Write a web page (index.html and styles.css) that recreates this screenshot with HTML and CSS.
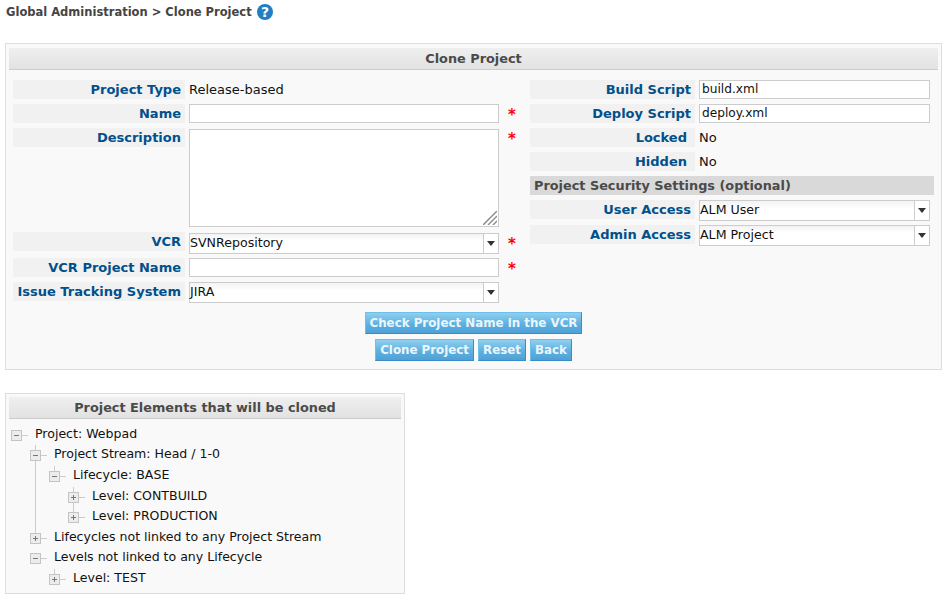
FILE: index.html
```html
<!DOCTYPE html>
<html lang="en">
<head>
<meta charset="utf-8">
<title>Clone Project</title>
<link rel="stylesheet" href="styles.css">
</head>
<body>
<svg class="defs" width="0" height="0">
  <symbol id="t-minus" viewBox="0 0 17 11"><rect x=".5" y=".5" width="10" height="10" fill="#ececec" stroke="#c4c4c4"/><path d="M3 5.5h5" stroke="#777"/><path d="M11 5.5h6" stroke="#ccc"/></symbol>
  <symbol id="t-plus" viewBox="0 0 17 11"><rect x=".5" y=".5" width="10" height="10" fill="#ececec" stroke="#c4c4c4"/><path d="M3 5.5h5M5.5 3v5" stroke="#777"/><path d="M11 5.5h6" stroke="#ccc"/></symbol>
</svg>
<div class="crumb">
  <span>Global Administration &gt; Clone Project</span>
  <svg class="help" width="16" height="16" viewBox="0 0 16 16"><circle cx="8" cy="8" r="8" fill="#1f7fc4"/><text x="8" y="13" text-anchor="middle" class="help-q">?</text></svg>
</div>
<section class="panel main">
  <h2 class="head">Clone Project</h2>
  <div class="cols">
    <div class="left">
      <div class="row"><div class="lab">Project Type</div><div class="val">Release-based</div></div>
      <div class="row"><div class="lab">Name</div><div class="input"></div><div class="star">*</div></div>
      <div class="row tall"><div class="lab">Description</div><div class="input area"><svg class="grip" width="14" height="14" viewBox="0 0 14 14"><path d="M0 14L14 0M5 14L14 5M10 14L14 10" stroke="#888" stroke-width="1.4"/></svg></div><div class="star">*</div></div>
      <div class="row off vcr"><div class="lab">VCR</div><div class="select"><span class="sv">SVNRepository</span><span class="arrow"></span></div><div class="star">*</div></div>
      <div class="row"><div class="lab">VCR Project Name</div><div class="input"></div><div class="star">*</div></div>
      <div class="row"><div class="lab">Issue Tracking System</div><div class="select"><span class="sv">JIRA</span><span class="arrow"></span></div></div>
    </div>
    <div class="right">
      <div class="row"><div class="lab">Build Script</div><div class="input text">build.xml</div></div>
      <div class="row"><div class="lab">Deploy Script</div><div class="input text">deploy.xml</div></div>
      <div class="row"><div class="lab pad">Locked</div><div class="val">No</div></div>
      <div class="row"><div class="lab pad">Hidden</div><div class="val">No</div></div>
      <div class="sect">Project Security Settings (optional)</div>
      <div class="row wide"><div class="lab">User Access</div><div class="select"><span class="sv">ALM User</span><span class="arrow"></span></div></div>
      <div class="row wide"><div class="lab">Admin Access</div><div class="select"><span class="sv">ALM Project</span><span class="arrow"></span></div></div>
    </div>
  </div>
  <div class="btns"><button class="btn">Check Project Name in the VCR</button></div>
  <div class="btns second"><button class="btn">Clone Project</button><button class="btn">Reset</button><button class="btn">Back</button></div>
</section>
<section class="panel tree">
  <h2 class="head">Project Elements that will be cloned</h2>
  <ul class="nodes">
    <li class="guide g1"></li>
    <li class="guide g2"></li>
    <li class="n l0"><svg class="tw"><use href="#t-minus"/></svg>Project: Webpad</li>
    <li class="n l1"><svg class="tw"><use href="#t-minus"/></svg>Project Stream: Head / 1-0</li>
    <li class="n l2 stub"><svg class="tw"><use href="#t-minus"/></svg>Lifecycle: BASE</li>
    <li class="n l3"><svg class="tw"><use href="#t-plus"/></svg>Level: CONTBUILD</li>
    <li class="n l3"><svg class="tw"><use href="#t-plus"/></svg>Level: PRODUCTION</li>
    <li class="n l1"><svg class="tw"><use href="#t-plus"/></svg>Lifecycles not linked to any Project Stream</li>
    <li class="n l1"><svg class="tw"><use href="#t-minus"/></svg>Levels not linked to any Lifecycle</li>
    <li class="n l2 stub"><svg class="tw"><use href="#t-plus"/></svg>Level: TEST</li>
  </ul>
</section>
</body>
</html>
```

FILE: styles.css
```css
* { box-sizing: border-box; }
html, body { margin: 0; padding: 0; }
body {
  background: #fff;
  color: #111;
  font: 13px "DejaVu Sans", Verdana, sans-serif;
  height: 601px;
  overflow: hidden;
}
.defs { position: absolute; }
.crumb {
  display: flex;
  align-items: center;
  gap: 5px;
  height: 16px;
  margin: 4px 0 0 6px;
  font-weight: bold;
  font-size: 11.5px;
  color: #444;
}
.help-q { fill: #fff; font: bold 14px "DejaVu Sans", sans-serif; }
.panel {
  background: #f9f9f9;
  border: 1px solid #ddd;
}
.main {
  width: 937px;
  height: 327px;
  margin: 23px 0 0 5px;
  padding: 4px 3px 0;
}
.head {
  margin: 0;
  height: 22px;
  line-height: 22px;
  text-align: center;
  font-size: 12.85px;
  font-weight: bold;
  color: #4a4a4a;
  background: linear-gradient(#efefef, #e2e2e2);
  border-bottom: 1px solid #ccc;
}
.cols { display: flex; padding: 10px 0 0 4px; }
.left { width: 517px; }
.right { width: 404px; }
.row { display: flex; align-items: flex-start; min-height: 24px; }
.row.tall { min-height: 104px; }
.row.vcr { min-height: 26px; }
.row.wide { min-height: 25px; }
.lab {
  height: 19px;
  line-height: 20px;
  text-align: right;
  font-weight: bold;
  color: #00508c;
  background: #f1f1f1;
  padding-right: 4px;
  flex: none;
}
.left .lab { width: 172px; }
.right .lab { width: 165px; }
.lab.pad { padding-right: 8px; }
.val { margin-left: 4px; line-height: 20px; }
.input {
  position: relative;
  height: 19px;
  margin-left: 4px;
  background: #fff;
  border: 1px solid #ccc;
  flex: none;
}
.left .input, .left .select { width: 310px; }
.right .input, .right .select { width: 231px; }
.input.text { font-size: 12.2px; line-height: 17px; padding-left: 2px; }
.input.area { height: 98px; margin-top: 1px; }
.off .select, .off .star { margin-top: 1px; }
.grip { position: absolute; right: 1px; bottom: 1px; }
.select {
  display: flex;
  height: 21px;
  margin-left: 4px;
  background: linear-gradient(#f3f3f3, #fff 40%);
  border: 1px solid #ccc;
  flex: none;
  font-size: 12.6px;
  line-height: 17px;
}
.sv { flex: 1; }
.arrow {
  width: 15px;
  border-left: 1px solid #ccc;
  background: #fff;
  position: relative;
}
.arrow::after {
  content: "";
  position: absolute;
  left: 3px;
  top: 7px;
  border: 4px solid transparent;
  border-top: 5px solid #333;
  border-bottom: 0;
}
.star {
  margin-left: 9px;
  color: #f00;
  font-weight: bold;
  font-size: 15px;
  line-height: 22px;
}
.sect {
  width: 404px;
  height: 19px;
  line-height: 20px;
  margin-bottom: 5px;
  padding-left: 4px;
  font-size: 12.85px;
  font-weight: bold;
  color: #4a4a4a;
  background: #d9d9d9;
}
.btns { display: flex; justify-content: center; gap: 4px; margin-top: 6px; }
.second { margin-top: 5px; }
.btn {
  height: 22px;
  padding: 0 4px;
  font: bold 11.85px "DejaVu Sans", sans-serif;
  color: #eaf6fc;
  background: linear-gradient(#8fd0f0, #5fb0e0 55%, #4fa0d6);
  border: 1px solid #6fbfe8;
  border-bottom-color: #3a8cc8;
  border-right-color: #3a8cc8;
  border-radius: 0;
}
.tree {
  width: 400px;
  height: 201px;
  margin: 23px 0 0 5px;
  padding: 3px 3px 0;
  font-size: 12.55px;
}
.nodes { list-style: none; margin: 4.75px 0 0; padding: 0; position: relative; }
.n {
  position: relative;
  display: flex;
  height: 20.6px;
  line-height: 20px;
  white-space: nowrap;
}
.tw { flex: none; width: 17px; height: 11px; margin-top: 6px; margin-right: 7px; }
.l0 { padding-left: 2px; }
.l1 { padding-left: 21px; }
.l2 { padding-left: 40px; }
.l3 { padding-left: 59px; }
.stub::before {
  content: "";
  position: absolute;
  top: 1px;
  left: 45px;
  width: 1px;
  height: 5px;
  background: #ccc;
}
.guide { position: absolute; width: 1px; background: #ccc; }
.g1 { left: 26px; top: 21px; height: 89px; }
.g2 { left: 64px; top: 63px; height: 25px; }
```
